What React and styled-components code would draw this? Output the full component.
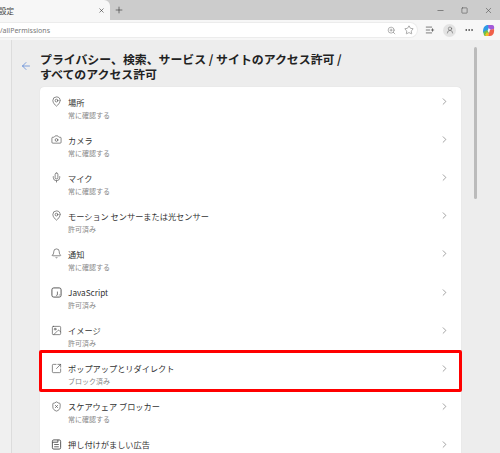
import React from 'react'
import styled, { createGlobalStyle } from 'styled-components'
import { Plus, X, Minus, Square, ZoomIn, Star, ListPlus, UserRound, MoreHorizontal, ArrowLeft, ChevronRight, MapPin, Camera, Mic, Bell, ShieldX, SquareArrowOutUpRight, Image } from 'lucide-react'

const GlobalStyle = createGlobalStyle`
  html, body { margin: 0; padding: 0; }
  body {
    width: 500px;
    height: 453px;
    overflow: hidden;
    background: #ededed;
    font-family: "Noto Sans CJK JP", "Noto Sans", sans-serif;
  }
`

const Page = styled.div`
  width: 500px;
  height: 453px;
  display: flex;
  flex-direction: column;
  overflow: hidden;
`
const TabStrip = styled.div`
  height: 20px;
  flex: none;
  display: flex;
  align-items: stretch;
  background: #cccccc;
  color: #333;
`
const Tab = styled.div`
  width: 110px;
  padding: 0 5px 0 0;
  box-sizing: border-box;
  background: #f7f7f7;
  border-radius: 0 6px 0 0;
  display: flex;
  align-items: center;
  justify-content: space-between;
  font-size: 7.5px;
  overflow: hidden;
`
const TabTitle = styled.span`
  margin-left: -1px;
  color: #444;
`
const NewTab = styled.div`
  width: 18px;
  display: flex;
  align-items: center;
  justify-content: center;
`
const Spacer = styled.div`
  flex: 1;
`
const WinButton = styled.div`
  width: 24px;
  display: flex;
  align-items: center;
  justify-content: center;
  color: #444;
`
const AddressRow = styled.div`
  height: 20px;
  flex: none;
  background: #f7f7f7;
  display: flex;
  align-items: center;
  padding-right: 5px;
`
const AddressBar = styled.div`
  width: 418px;
  height: 16px;
  box-sizing: border-box;
  background: #fff;
  border-radius: 0 8px 8px 0;
  border: 1px solid #ececec;
  border-left: none;
  display: flex;
  align-items: center;
  font-size: 7px;
  color: #777;
  font-family: "Noto Sans", sans-serif;
`
const Url = styled.span`
  flex: 1;
`
const BarIcon = styled.div`
  width: 17px;
  height: 14px;
  display: flex;
  align-items: center;
  justify-content: center;
  color: #666;
`
const Avatar = styled.div`
  width: 13px;
  height: 13px;
  border-radius: 50%;
  background: #e3e3e3;
  display: flex;
  align-items: center;
  justify-content: center;
  color: #555;
`
const Tools = styled.div`
  flex: 1;
  display: flex;
  align-items: center;
  justify-content: space-between;
  padding-left: 7px;
`
const Body = styled.div`
  flex: 1;
  min-height: 0;
  display: flex;
`
const Rail = styled.div`
  width: 11px;
  flex: none;
  background: #f0f0f0;
  border-right: 1px solid #dcdcdc;
`
const Main = styled.div`
  flex: 1;
  display: flex;
  padding: 12px 0 0 7px;
  min-width: 0;
`
const Back = styled.div`
  width: 21px;
  flex: none;
  color: #3f74d0;
  height: 27px;
  padding-left: 1px;
  box-sizing: border-box;
  display: flex;
  align-items: center;
`
const Content = styled.div`
  width: 421px;
  flex: none;
`
const Title = styled.h1`
  margin: 0 0 6px;
  font-size: 11.9px;
  line-height: 14.5px;
  font-weight: 700;
  color: #222;
  width: 306px;
`
const Card = styled.div`
  background: #fff;
  border-radius: 4px 4px 0 0;
  box-shadow: 0 0 1px rgba(0, 0, 0, 0.15);
  padding-top: 2px;
  height: 400px;
`
const Row = styled.div`
  position: relative;
  height: 38.1px;
  box-sizing: border-box;
  display: flex;
  align-items: center;
  padding: 0 11px;
`
const RowIcon = styled.div`
  width: 17px;
  flex: none;
  display: flex;
  color: #4a4a4a;
  margin-top: -13px;
`
const RowText = styled.div`
  flex: 1;
  min-width: 0;
`
const RowTitle = styled.div`
  font-size: 8.2px;
  line-height: 12px;
  color: #333;
`
const RowSub = styled.div`
  font-size: 7px;
  line-height: 12px;
  min-height: 12px;
  color: #888;
  margin-top: 1px;
`
const Chevron = styled.div`
  display: flex;
  color: #666;
  margin-top: -13px;
`
const Highlight = styled.div`
  position: absolute;
  left: -1px;
  right: -1px;
  top: -6px;
  bottom: 2px;
  border: 3px solid #ff0000;
  border-radius: 2px;
  pointer-events: none;
`
const Scrollbar = styled.div`
  width: 20px;
  flex: none;
  display: flex;
  justify-content: flex-end;
  margin-top: -5px;
  padding-right: 4px;
  box-sizing: border-box;
`
const Thumb = styled.div`
  width: 3px;
  height: 152px;
  border-radius: 2px;
  background: #bbbbbb;
`

const CopilotMark = () => (
  <svg width="13" height="13" viewBox="0 0 13 13">
    <path d="M1 8 C1 3 3 1 6 1 L8 1 L5 8 L3 11 Z" fill="#2f9be6" />
    <path d="M6 1 L10 1 C12 1 12.5 3 12 5 L9 6 L6.5 4 Z" fill="#a35bd8" />
    <path d="M1.5 8 L5 6 L7 9 L6 12 L3 12 C2 12 1.5 10 1.5 8 Z" fill="#6cc04a" />
    <path d="M12 5 C12.5 9 11 12 8 12 L6 12 L8 6 Z" fill="#f0604a" />
    <path d="M3 11 L5 8 L7 10 L6 12 L4 12 Z" fill="#f5c020" />
  </svg>
)

const ScriptIcon = ({ size }) => (
  <svg width={size} height={size} viewBox="0 0 12 12" fill="none" stroke="currentColor" strokeWidth="1">
    <rect x="1" y="1" width="10" height="10" rx="2" />
    <path d="M7 5v3.4c0 .8-1 .9-1.6.4" strokeWidth="0.8" />
    <path d="M8.6 8.8c.5.2 1 0 1-.5" strokeWidth="0.7" />
  </svg>
)

const AdIcon = ({ size }) => (
  <svg width={size} height={size} viewBox="0 0 12 12" fill="none" stroke="currentColor" strokeWidth="1">
    <rect x="1.5" y="1" width="9" height="10" rx="1.5" />
    <path d="M1.5 3.5h6" />
    <path d="M7.5 1v2.5" />
    <path d="M3.5 6h5M3.5 8.5h5" strokeWidth="0.9" />
  </svg>
)

const items = [
  { icon: MapPin, title: '場所', sub: '常に確認する' },
  { icon: Camera, title: 'カメラ', sub: '常に確認する' },
  { icon: Mic, title: 'マイク', sub: '常に確認する' },
  { icon: MapPin, title: 'モーション センサーまたは光センサー', sub: '許可済み' },
  { icon: Bell, title: '通知', sub: '常に確認する' },
  { icon: ScriptIcon, title: 'JavaScript', sub: '許可済み' },
  { icon: Image, title: 'イメージ', sub: '許可済み' },
  { icon: SquareArrowOutUpRight, title: 'ポップアップとリダイレクト', sub: 'ブロック済み', marked: true },
  { icon: ShieldX, title: 'スケアウェア ブロッカー', sub: '常に確認する' },
  { icon: AdIcon, title: '押し付けがましい広告', sub: '' },
]

const App = () => {
  return (
    <Page>
      <GlobalStyle />
      <TabStrip>
        <Tab>
          <TabTitle>設定</TabTitle>
          <X size={7} strokeWidth={2} />
        </Tab>
        <NewTab><Plus size={10} strokeWidth={1.5} /></NewTab>
        <Spacer />
        <WinButton><Minus size={9} strokeWidth={1.5} /></WinButton>
        <WinButton><Square size={7} strokeWidth={1.8} /></WinButton>
        <WinButton><X size={9} strokeWidth={1.4} /></WinButton>
      </TabStrip>
      <AddressRow>
        <AddressBar>
          <Url>/allPermissions</Url>
          <BarIcon><ZoomIn size={9} strokeWidth={1.3} /></BarIcon>
          <BarIcon><Star size={10} strokeWidth={1.3} /></BarIcon>
        </AddressBar>
        <Tools>
          <ListPlus size={10} strokeWidth={1.5} color="#333" />
          <Avatar><UserRound size={8} strokeWidth={1.6} /></Avatar>
          <MoreHorizontal size={10} strokeWidth={1.8} color="#333" />
          <CopilotMark />
        </Tools>
      </AddressRow>
      <Body>
        <Rail />
        <Main>
          <Back><ArrowLeft size={12} strokeWidth={1.3} /></Back>
          <Content>
            <Title>プライバシー、検索、サービス / サイトのアクセス許可 / すべてのアクセス許可</Title>
            <Card>
              {items.map(item => (
                <Row key={item.title}>
                  <RowIcon><item.icon size={11} strokeWidth={1.4} /></RowIcon>
                  <RowText>
                    <RowTitle>{item.title}</RowTitle>
                    <RowSub>{item.sub}</RowSub>
                  </RowText>
                  <Chevron><ChevronRight size={11} strokeWidth={1.3} /></Chevron>
                  {item.marked && <Highlight />}
                </Row>
              ))}
            </Card>
          </Content>
          <Scrollbar><Thumb /></Scrollbar>
        </Main>
      </Body>
    </Page>
  )
}

export default App
